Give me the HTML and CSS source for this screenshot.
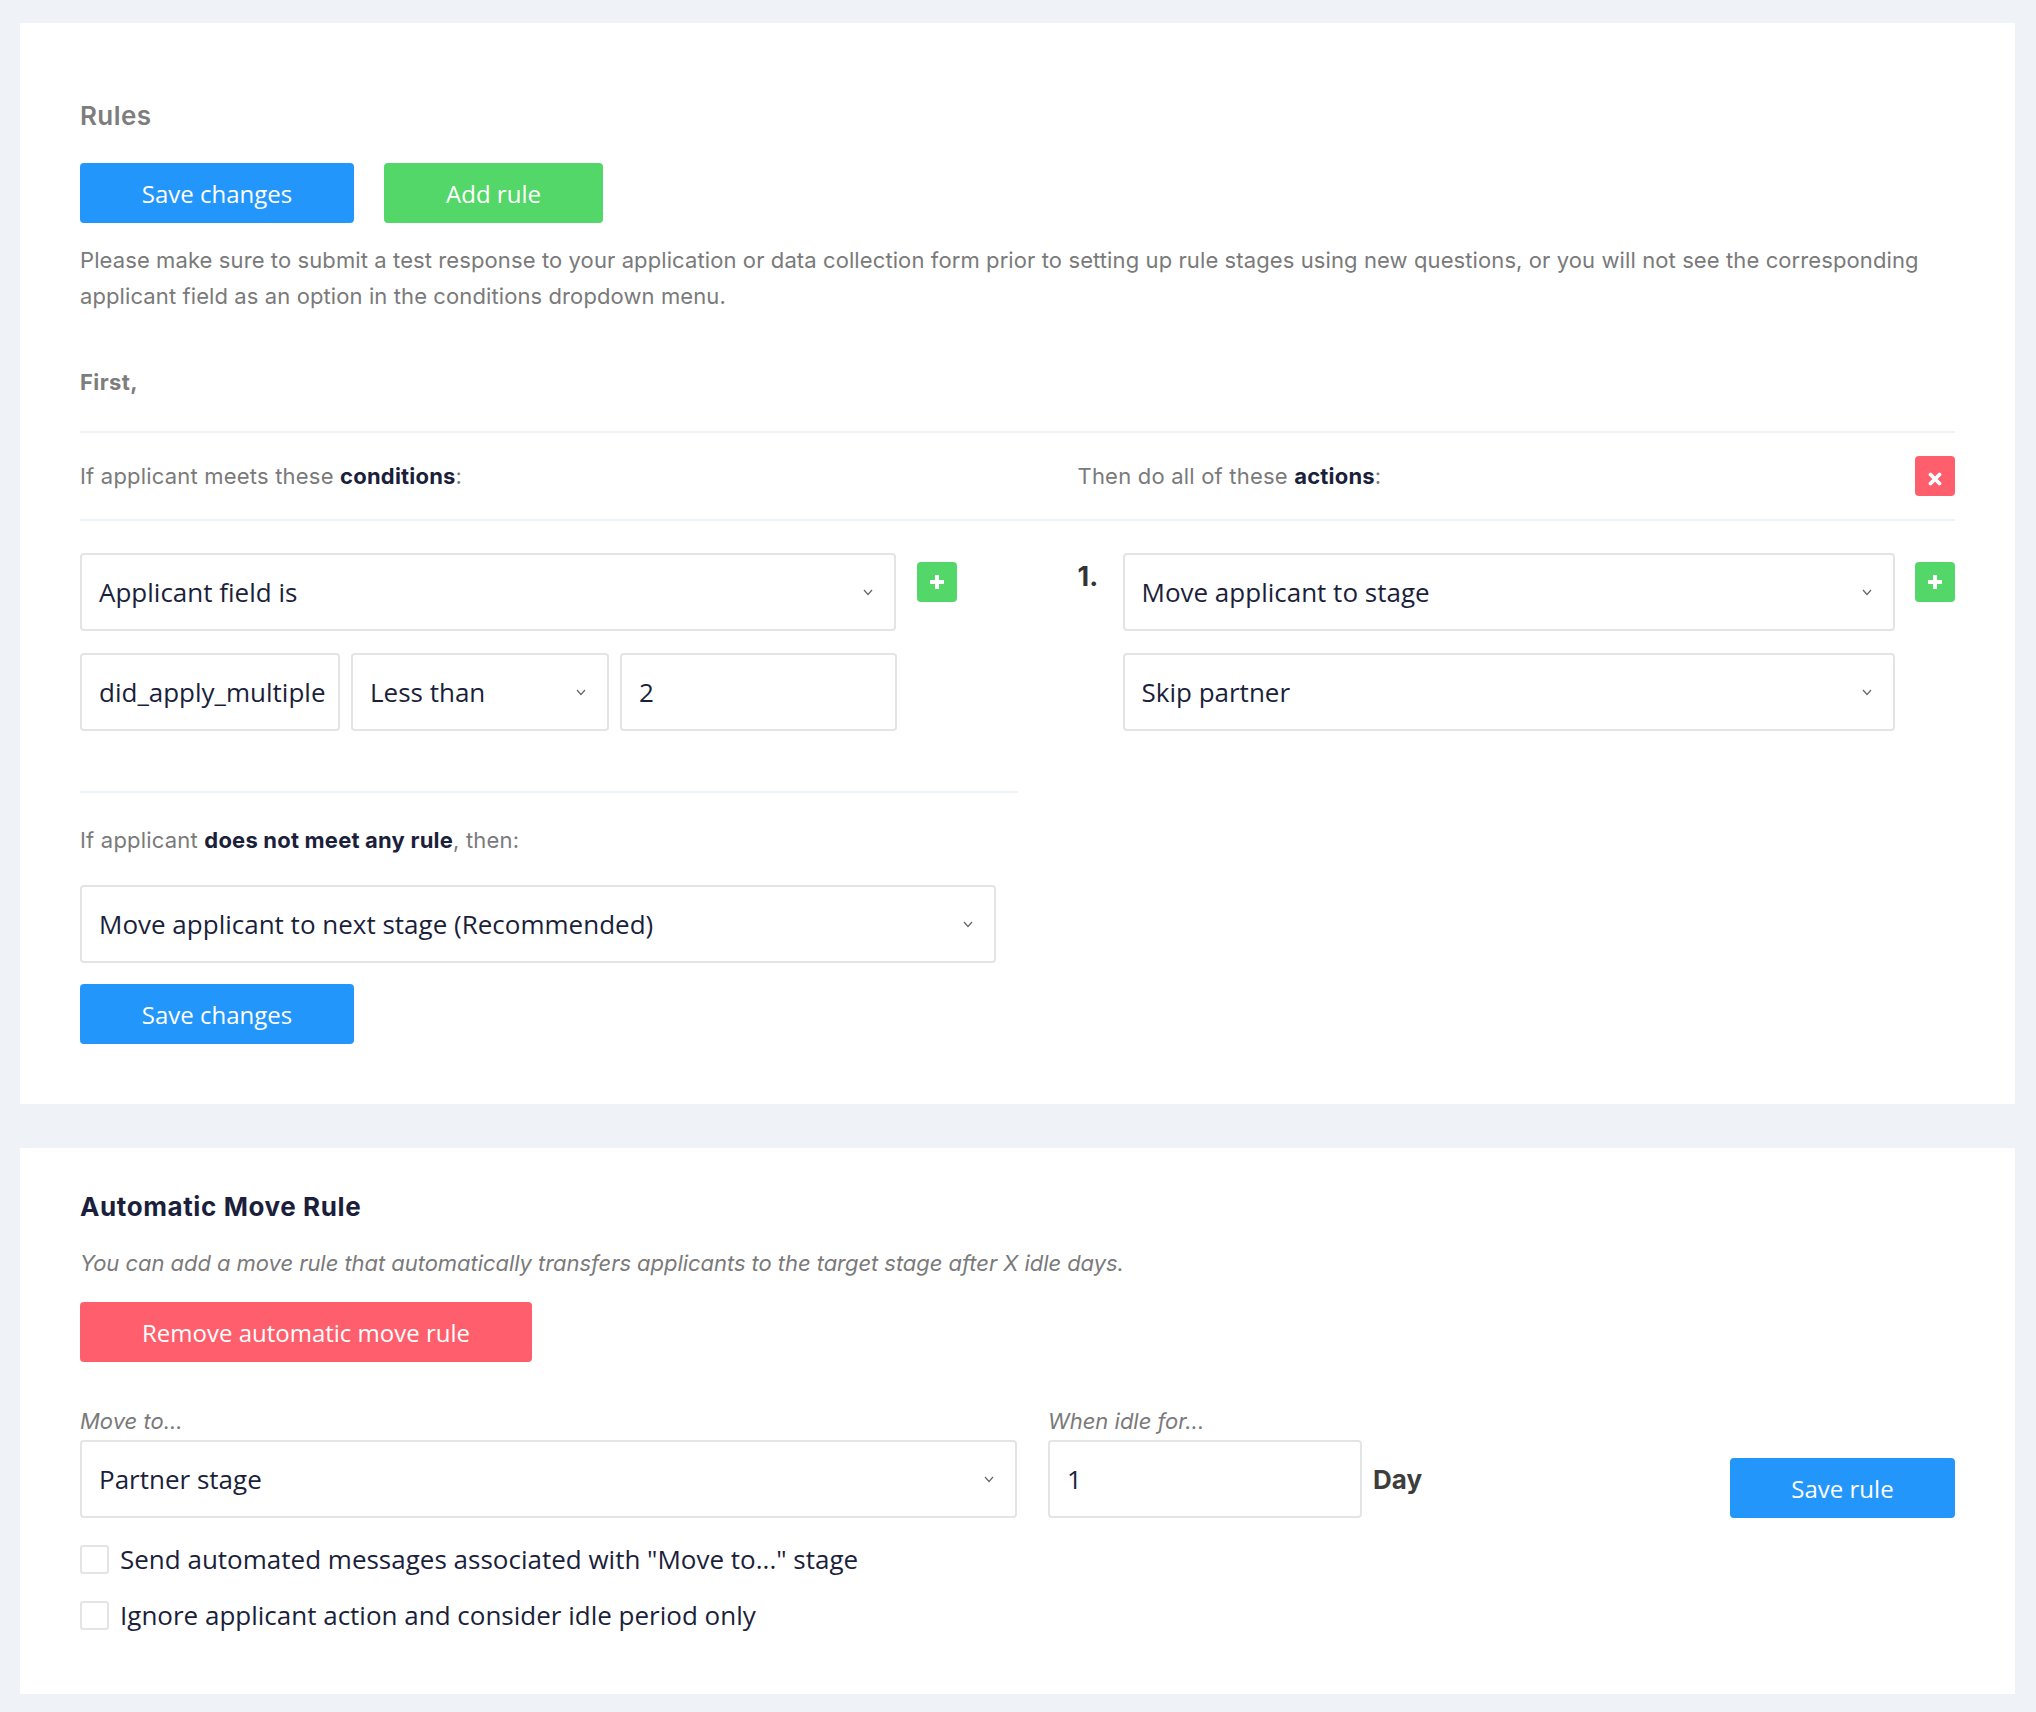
FILE: index.html
```html
<!DOCTYPE html>
<html lang="en">
<head>
  <meta charset="UTF-8">
  <title>Rules</title>
  <link rel="stylesheet" href="styles.css">
</head>
<body>
  <div class="page">
    <section class="card rules-card">
      <h3 class="card-title muted">Rules</h3>
      <div class="btn-row">
        <button class="btn btn-blue btn-save">Save changes</button>
        <button class="btn btn-green btn-add">Add rule</button>
      </div>
      <p class="help">Please make sure to submit a test response to your application or data collection form prior to setting up rule stages using new questions, or you will not see the corresponding applicant field as an option in the conditions dropdown menu.</p>
      <h4 class="first">First,</h4>

      <div class="rule">
        <div class="rule-head">
          <div class="head-left">If applicant meets these <b>conditions</b>:</div>
          <div class="head-right">
            <span>Then do all of these <b>actions</b>:</span>
            <button class="icon-btn red" title="Remove rule">
              <svg class="x-icon" width="14" height="14" viewBox="0 0 14 14"><path d="M2.5 2.5 L11.5 11.5 M11.5 2.5 L2.5 11.5" stroke="#fff" stroke-width="3.8" stroke-linecap="round"/></svg>
            </button>
          </div>
        </div>

        <div class="rule-body">
          <div class="conditions">
            <div class="cond-line">
              <div class="field select">
                <span>Applicant field is</span>
                <svg class="chev" width="10" height="7" viewBox="0 0 10 7"><polyline points="1,1 5,5.5 9,1" fill="none" stroke="#666" stroke-width="1.2"/></svg>
              </div>
              <button class="icon-btn green" title="Add condition">
                <svg width="18" height="18" viewBox="0 0 18 18"><path d="M9 2 V16 M2 9 H16" stroke="#fff" stroke-width="4"/></svg>
              </button>
            </div>
            <div class="cond-fields">
              <div class="field">did_apply_multiple</div>
              <div class="field select">
                <span>Less than</span>
                <svg class="chev" width="10" height="7" viewBox="0 0 10 7"><polyline points="1,1 5,5.5 9,1" fill="none" stroke="#666" stroke-width="1.2"/></svg>
              </div>
              <div class="field">2</div>
            </div>
          </div>

          <div class="actions">
            <div class="action">
              <span class="num">1.</span>
              <div class="action-fields">
                <div class="field select">
                  <span>Move applicant to stage</span>
                  <svg class="chev" width="10" height="7" viewBox="0 0 10 7"><polyline points="1,1 5,5.5 9,1" fill="none" stroke="#666" stroke-width="1.2"/></svg>
                </div>
                <div class="field select">
                  <span>Skip partner</span>
                  <svg class="chev" width="10" height="7" viewBox="0 0 10 7"><polyline points="1,1 5,5.5 9,1" fill="none" stroke="#666" stroke-width="1.2"/></svg>
                </div>
              </div>
              <button class="icon-btn green" title="Add action">
                <svg width="18" height="18" viewBox="0 0 18 18"><path d="M9 2 V16 M2 9 H16" stroke="#fff" stroke-width="4"/></svg>
              </button>
            </div>
          </div>
        </div>
      </div>

      <div class="fallback">
        <p class="label">If applicant <b>does not meet any rule</b>, then:</p>
        <div class="field select fallback-select">
          <span>Move applicant to next stage (Recommended)</span>
          <svg class="chev" width="10" height="7" viewBox="0 0 10 7"><polyline points="1,1 5,5.5 9,1" fill="none" stroke="#666" stroke-width="1.2"/></svg>
        </div>
        <button class="btn btn-blue btn-save">Save changes</button>
      </div>
    </section>

    <section class="card move-card">
      <h3 class="card-title">Automatic Move Rule</h3>
      <p class="note">You can add a move rule that automatically transfers applicants to the target stage after X idle days.</p>
      <button class="btn btn-red btn-remove">Remove automatic move rule</button>

      <div class="move-grid">
        <div class="move-to">
          <p class="small-label">Move to...</p>
          <div class="field select">
            <span>Partner stage</span>
            <svg class="chev" width="10" height="7" viewBox="0 0 10 7"><polyline points="1,1 5,5.5 9,1" fill="none" stroke="#666" stroke-width="1.2"/></svg>
          </div>
        </div>
        <div class="idle">
          <div>
            <p class="small-label">When idle for...</p>
            <div class="idle-row">
              <div class="field idle-input">1</div>
              <span class="unit">Day</span>
            </div>
          </div>
          <button class="btn btn-blue btn-rule">Save rule</button>
        </div>
      </div>

      <label class="check"><span class="box"></span>Send automated messages associated with "Move to..." stage</label>
      <label class="check"><span class="box"></span>Ignore applicant action and consider idle period only</label>
    </section>
  </div>
</body>
</html>
```

FILE: styles.css
```css
html, body {
  margin: 0;
  background-color: #eff3f7;
}
body {
  font-family: 'Inter', 'Liberation Sans', sans-serif;
  color: #7a7a7a;
}
.page {
  padding: 23px 21px 20px 20px;
}
.card {
  background-color: #fff;
  padding: 60px;
}
.rules-card {
  padding-top: 77px;
}
.move-card {
  margin-top: 44px;
  padding-top: 43px;
  padding-bottom: 61px;
}
.card-title {
  margin: 0;
  font-size: 26px;
  line-height: 32px;
  font-weight: 700;
  color: #1b1f3b;
  letter-spacing: 0.6px;
}
.card-title.muted {
  color: #7d7d7d;
  font-weight: 600;
  letter-spacing: 0.4px;
}
b {
  color: #1b1f3b;
  font-weight: 700;
}

/* buttons */
.btn {
  font-family: 'Open Sans', sans-serif;
  font-size: 24px;
  color: #fff;
  border: none;
  border-radius: 4px;
  height: 60px;
  cursor: pointer;
  padding: 0;
}
.btn-blue { background-color: #2396fb; }
.btn-green { background-color: #53d769; }
.btn-red { background-color: #ff5e6c; }
.btn-save { width: 274px; }
.btn-add { width: 219px; }
.btn-remove { width: 452px; }
.btn-rule { width: 225px; }
.btn-row {
  display: flex;
  gap: 30px;
  margin-top: 31px;
}
.help {
  margin: 19px 0 0;
  font-size: 22px;
  line-height: 36px;
  letter-spacing: 0.1px;
}
.first {
  margin: 50px 0 0;
  font-size: 22px;
  line-height: 36px;
  font-weight: 700;
  color: #7d7d7d;
  letter-spacing: 0.4px;
}

/* rule block */
.rule {
  margin-top: 31px;
}
.rule-head {
  display: grid;
  grid-template-columns: 1fr 1fr;
  border-top: 2px solid #eef3fa;
  border-bottom: 2px solid #eef3fa;
  padding: 23px 0;
  font-size: 22px;
  line-height: 40px;
  letter-spacing: 0.2px;
}
.head-right {
  display: flex;
  justify-content: space-between;
  align-items: center;
  padding-left: 60px;
}
.icon-btn {
  width: 40px;
  height: 40px;
  border: none;
  border-radius: 4px;
  padding: 0;
  display: flex;
  align-items: center;
  justify-content: center;
  cursor: pointer;
  flex-shrink: 0;
}
.icon-btn.red { background-color: #ff5e6c; }
.icon-btn.green { background-color: #53d769; }
.x-icon {
  margin-top: 6px;
}

.rule-body {
  display: grid;
  grid-template-columns: 1fr 1fr;
  margin-top: 32px;
}
.field {
  box-sizing: border-box;
  height: 78px;
  border: 2px solid #e4e4e4;
  border-radius: 4px;
  padding: 0 17px;
  display: flex;
  align-items: center;
  font-family: 'Open Sans', sans-serif;
  font-size: 26px;
  color: #1b1f3b;
  background-color: #fff;
  white-space: nowrap;
  overflow: hidden;
}
.select {
  justify-content: space-between;
}
.chev {
  flex-shrink: 0;
  margin-right: 4px;
}
.cond-line {
  display: flex;
  padding-right: 61px;
}
.cond-line .field {
  flex: 1;
}
.cond-line .icon-btn {
  margin-top: 9px;
  margin-left: 21px;
}
.action .icon-btn {
  margin-top: 9px;
  margin-left: 20px;
}
.cond-fields {
  display: grid;
  grid-template-columns: 260px 258px 1fr;
  gap: 11px;
  margin: 22px 121px 0 0;
}
.actions {
  padding-left: 60px;
}
.action {
  display: flex;
}
.num {
  width: 45px;
  flex-shrink: 0;
  font-size: 27px;
  font-weight: 700;
  color: #333;
  line-height: 32px;
  margin-top: 8px;
}
.action-fields {
  flex: 1;
  display: flex;
  flex-direction: column;
  gap: 22px;
}

/* fallback */
.fallback {
  width: 50%;
  margin-top: 60px;
  border-top: 2px solid #eef3fa;
  padding-top: 29px;
}
.label {
  margin: 0;
  font-size: 22px;
  line-height: 36px;
  letter-spacing: 0.2px;
}
.fallback-select {
  width: 916px;
  margin: 27px 0 21px;
}
.fallback .btn {
  display: block;
}

/* automatic move */
.note {
  margin: 22px 0 21px;
  font-size: 22px;
  line-height: 36px;
  font-style: italic;
  letter-spacing: -0.05px;
}
.move-grid {
  display: grid;
  grid-template-columns: 937px 1fr;
  margin-top: 41px;
}
.small-label {
  margin: 0 0 1px;
  font-size: 22px;
  line-height: 36px;
  font-style: italic;
  letter-spacing: 0;
}
.idle {
  padding-left: 31px;
  display: flex;
  justify-content: space-between;
  align-items: flex-end;
}
.idle-row {
  display: flex;
  align-items: center;
}
.idle-input {
  width: 314px;
}
.unit {
  margin-left: 11px;
  font-size: 26px;
  font-weight: 700;
  color: #3d3d3d;
}
.check {
  display: flex;
  align-items: center;
  gap: 11px;
  font-family: 'Open Sans', sans-serif;
  font-size: 26px;
  line-height: 36px;
  color: #1b1f3b;
  margin-top: 20px;
}
.move-card .check:first-of-type {
  margin-top: 23px;
}
.box {
  box-sizing: border-box;
  width: 29px;
  height: 29px;
  border: 2px solid #e4e4e4;
  border-radius: 3px;
}
```
